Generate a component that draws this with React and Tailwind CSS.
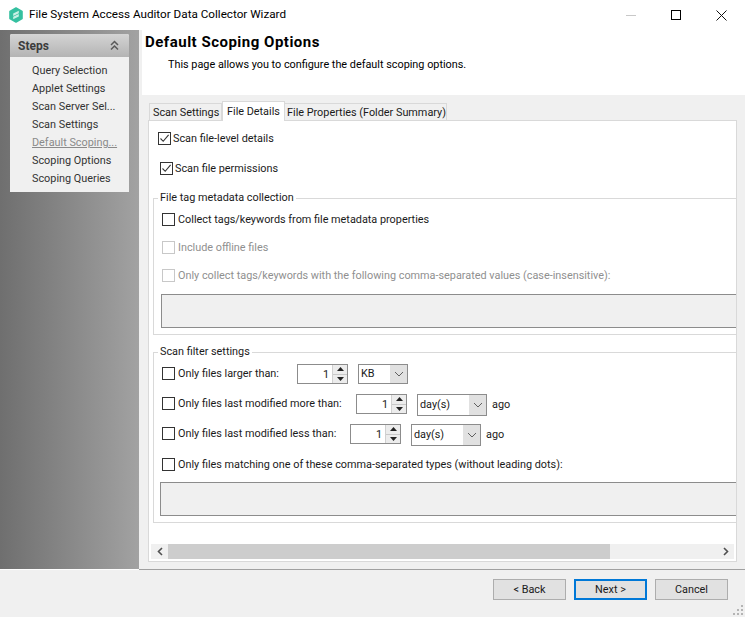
import React from 'react';

const Check = ({ checked, disabled, className = '' }) => (
	<span
		className={`flex items-center justify-center w-[13px] h-[13px] shrink-0 border bg-white ${disabled ? 'border-[#c8c8c8]' : 'border-[#333333]'} ${className}`}
	>
		{checked && (
			<svg width="11" height="11" viewBox="0 0 11 11">
				<path d="M1.5 5.5 L4.2 8.3 L9.6 1.8" fill="none" stroke="#333333" strokeWidth="1.1" />
			</svg>
		)}
	</span>
);

const Spinner = () => (
	<div className="flex h-[20px] w-[51px] shrink-0 border border-[#8c8c8c] bg-white">
		<div className="flex-1 text-right pr-[3px] leading-[19px]">1</div>
		<div className="flex flex-col w-[15px] border-l border-[#d0d0d0]">
			<div className="flex-1 flex items-center justify-center bg-[#ececec] border-b border-[#c8c8c8]">
				<svg width="7" height="4" viewBox="0 0 7 4"><path d="M3.5 0 L7 4 L0 4 Z" fill="#222" /></svg>
			</div>
			<div className="flex-1 flex items-center justify-center bg-[#ececec]">
				<svg width="7" height="4" viewBox="0 0 7 4"><path d="M0 0 L7 0 L3.5 4 Z" fill="#222" /></svg>
			</div>
		</div>
	</div>
);

const Combo = ({ label, className = '' }) => (
	<div className={`flex shrink-0 border border-[#8c8c8c] bg-white ${className}`}>
		<div className="flex-1 pl-[2px] flex items-center">{label}</div>
		<div className="w-[17px] flex items-center justify-center bg-[#e1e1e1]">
			<svg width="10" height="6" viewBox="0 0 10 6"><path d="M1 1 L5 5 L9 1" fill="none" stroke="#606060" strokeWidth="1" /></svg>
		</div>
	</div>
);

const Row = ({ label, labelClass, unit, comboClass, ago, className = '' }) => (
	<div className={`flex items-start ${className}`}>
		<Check className="mt-[3px]" />
		<span className={`ml-[3px] mt-[3px] leading-[14px] whitespace-nowrap shrink-0 ${labelClass}`}>{label}</span>
		<Spinner />
		<Combo label={unit} className={comboClass} />
		{ago && <span className="ml-[5px] mt-[4px] leading-[14px]">ago</span>}
	</div>
);

const steps = ['Query Selection', 'Applet Settings', 'Scan Server Sel...', 'Scan Settings', 'Default Scoping...', 'Scoping Options', 'Scoping Queries'];

const App = () => {
	return (
		<div className="w-[745px] h-[617px] overflow-hidden flex flex-col bg-[#f0f0f0] text-[10.85px] text-[#1a1a1a] font-['Roboto',sans-serif]">
			<div className="h-[30px] shrink-0 bg-white flex items-center pl-[9px]">
				<svg width="14" height="16" viewBox="0 0 14 16">
					<path d="M7 1 L13 4.4 L13 11.6 L7 15 L1 11.6 L1 4.4 Z" fill="#35c0a0" stroke="#35c0a0" strokeWidth="1.6" strokeLinejoin="round" />
					<path d="M9.8 3.8 L4.2 6.6 L4.2 9 L9.8 6.2 Z M9.8 7 L4.2 9.8 L4.2 12.2 L9.8 9.4 Z" fill="#c9f0e5" />
				</svg>
				<span className="ml-[6px] text-[11.7px] text-black">File System Access Auditor Data Collector Wizard</span>
				<div className="ml-auto flex items-center">
					<div className="w-[10px] h-px bg-[#c8c8c8] mr-[35px]"></div>
					<div className="w-[10px] h-[10px] border border-black mr-[35px]"></div>
					<svg width="11" height="11" viewBox="0 0 11 11" className="mr-[18px]">
						<path d="M0.5 0.5 L10.5 10.5 M10.5 0.5 L0.5 10.5" stroke="#111" strokeWidth="1" />
					</svg>
				</div>
			</div>

			<div className="flex h-[540px] shrink-0">
				<aside className="w-[139px] shrink-0 pt-[4px] pl-[10px] bg-gradient-to-r from-[#6f6f6f] to-[#a2a2a2] border-b border-white">
					<div className="w-[119px] h-[158px] bg-[#f0f0f0] rounded-t-[2px]">
						<div className="h-[23px] pl-[8px] pr-[10px] flex items-center justify-between bg-gradient-to-b from-[#d4d4d4] to-[#b4b4b4] rounded-t-[2px]">
							<span className="text-[12px] font-bold text-[#3c3c3c]">Steps</span>
							<svg width="9" height="11" viewBox="0 0 9 11">
								<path d="M1 5 L4.5 1.5 L8 5 M1 9.5 L4.5 6 L8 9.5" fill="none" stroke="#5a5a5a" strokeWidth="1.5" />
							</svg>
						</div>
						<ul className="pt-[5px] pl-[22px]">
							{steps.map((step, i) => (
								<li key={step} className={`h-[18px] leading-[18px] whitespace-nowrap ${i === 4 ? 'text-[#8a8a8a] underline' : 'text-[#333333]'}`}>
									{step}
								</li>
							))}
						</ul>
					</div>
				</aside>

				<main className="flex-1 min-w-0 flex flex-col border-b border-[#a0a0a0]">
					<div className="h-[65px] shrink-0 ml-[3px] bg-white pl-[3px] pt-[3px]">
						<h1 className="text-[15px] font-bold leading-[18px] text-black tracking-[0.5px]">Default Scoping Options</h1>
						<p className="mt-[6px] pl-[23px] text-black">This page allows you to configure the default scoping options.</p>
					</div>

					<div className="flex-1 min-h-0 pl-[9px] pr-[8px] pt-[6px] pb-[7px] flex flex-col">
						<div className="flex items-end h-[19px] shrink-0 ml-px relative z-10">
							<div className="w-[73px] h-[17px] leading-[17px] pl-[3px] border border-b-0 border-[#d9d9d9] bg-[#f0f0f0] whitespace-nowrap">Scan Settings</div>
							<div className="w-[63px] h-[20px] leading-[20px] pl-[4px] border border-b-0 border-[#d9d9d9] bg-white mb-[-1px] whitespace-nowrap">File Details</div>
							<div className="w-[162px] h-[17px] leading-[17px] pl-[2px] border border-b-0 border-l-0 border-[#d9d9d9] bg-[#f0f0f0] whitespace-nowrap">File Properties (Folder Summary)</div>
						</div>

						<div className="flex-1 min-h-0 bg-white border border-[#d9d9d9] flex flex-col overflow-hidden">
							<div className="flex-1 min-h-0 overflow-hidden pl-[4px]">
								<div className="w-[640px]">
									<label className="flex items-center mt-[10px] ml-[5px] h-[14px]">
										<Check checked />
										<span className="ml-[2px] pt-[2px]">Scan file-level details</span>
									</label>
									<label className="flex items-center mt-[16px] ml-[7px] h-[14px]">
										<Check checked />
										<span className="ml-[2px] pt-[2px]">Scan file permissions</span>
									</label>

									<fieldset className="mt-[16px] w-[640px] h-[144px] border border-[#d9d9d9] pl-[8px]">
										<legend className="ml-[-4px] px-[2px] leading-[14px]">File tag metadata collection</legend>
										<label className="flex items-center mt-[7px] h-[14px]">
											<Check />
											<span className="ml-[3px] pt-[2px]">Collect tags/keywords from file metadata properties</span>
										</label>
										<label className="flex items-center mt-[14px] h-[14px] text-[#8f8f8f]">
											<Check disabled />
											<span className="ml-[3px] pt-[2px]">Include offline files</span>
										</label>
										<label className="flex items-center mt-[14px] h-[14px] text-[#8f8f8f]">
											<Check disabled />
											<span className="ml-[3px] pt-[2px] whitespace-nowrap">Only collect tags/keywords with the following comma-separated values (case-insensitive):</span>
										</label>
										<div className="mt-[12px] ml-[-1px] h-[34px] w-[620px] border border-[#8c8c8c] bg-[#f0f0f0]"></div>
									</fieldset>

									<fieldset className="mt-[11px] w-[640px] h-[177px] border border-[#d9d9d9] pl-[8px]">
										<legend className="ml-[-4px] px-[2px] leading-[12px]">Scan filter settings</legend>
										<Row label="Only files larger than:" labelClass="w-[119px]" unit="KB" comboClass="ml-[10px] w-[50px] h-[20px]" className="mt-[6px] h-[20px]" />
										<Row label="Only files last modified more than:" labelClass="w-[178px]" unit="day(s)" comboClass="ml-[10px] w-[70px] h-[22px]" ago className="mt-[10px] h-[20px]" />
										<Row label="Only files last modified less than:" labelClass="w-[172px]" unit="day(s)" comboClass="ml-[10px] w-[70px] h-[22px]" ago className="mt-[10px] h-[20px]" />
										<label className="flex items-center mt-[13px] h-[14px]">
											<Check />
											<span className="ml-[3px] pt-[2px] whitespace-nowrap">Only files matching one of these comma-separated types (without leading dots):</span>
										</label>
										<div className="mt-[11px] ml-[-2px] h-[34px] w-[620px] border border-[#8c8c8c] bg-[#f0f0f0]"></div>
									</fieldset>
								</div>
							</div>

							<div className="h-[15px] shrink-0 mx-[2px] mb-[2px] flex bg-[#f0f0f0]">
								<div className="w-[17px] flex items-center justify-center">
									<svg width="6" height="9" viewBox="0 0 6 9"><path d="M5 1 L1.5 4.5 L5 8" fill="none" stroke="#505050" strokeWidth="1.6" /></svg>
								</div>
								<div className="w-[442px] bg-[#cdcdcd]"></div>
								<div className="flex-1"></div>
								<div className="w-[17px] flex items-center justify-center">
									<svg width="6" height="9" viewBox="0 0 6 9"><path d="M1 1 L4.5 4.5 L1 8" fill="none" stroke="#505050" strokeWidth="1.6" /></svg>
								</div>
							</div>
						</div>
					</div>
				</main>
			</div>

			<footer className="flex-1 relative flex justify-end items-start pt-[9px] pr-[17px]">
				<button className="w-[73px] h-[21px] border border-[#adadad] bg-[#e1e1e1] leading-[19px]">&lt; Back</button>
				<button className="ml-[8px] w-[73px] h-[21px] border-2 border-[#0078d7] bg-[#e1e1e1] leading-[17px]">Next &gt;</button>
				<button className="ml-[8px] w-[73px] h-[21px] border border-[#adadad] bg-[#e1e1e1] leading-[19px]">Cancel</button>
				<svg width="10" height="10" viewBox="0 0 10 10" className="absolute right-[2px] bottom-[2px]">
					<path d="M8 0h2v2H8z M8 4h2v2H8z M4 4h2v2H4z M8 8h2v2H8z M4 8h2v2H4z M0 8h2v2H0z" fill="#b4b4b4" />
				</svg>
			</footer>
		</div>
	);
};

export default App;
